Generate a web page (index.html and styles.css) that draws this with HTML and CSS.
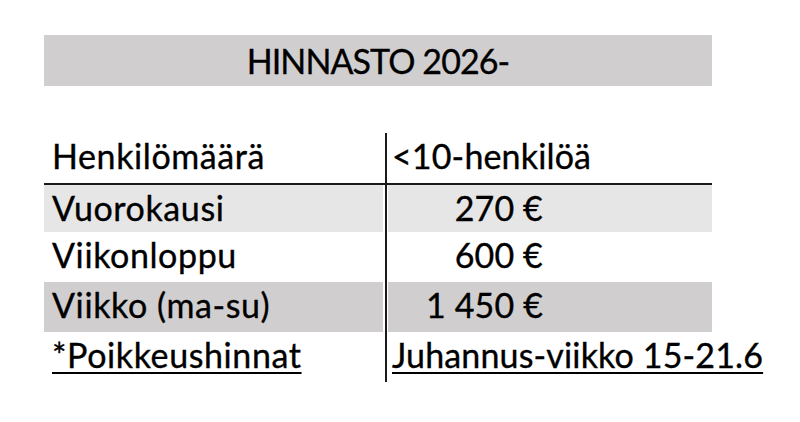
FILE: index.html
```html
<!DOCTYPE html>
<html lang="fi">
<head>
<meta charset="utf-8">
<title>Hinnasto 2026</title>
<link rel="stylesheet" href="styles.css">
</head>
<body>
<div class="sheet">
  <div class="title">HINNASTO 2026-</div>
  <div class="table">
    <div class="row head">
      <div class="c1">Henkilömäärä</div>
      <div class="c2">&lt;10-henkilöä</div>
    </div>
    <div class="row light first">
      <div class="c1">Vuorokausi</div>
      <div class="c2 num">270 €</div>
    </div>
    <div class="row">
      <div class="c1">Viikonloppu</div>
      <div class="c2 num">600 €</div>
    </div>
    <div class="row dark">
      <div class="c1">Viikko (ma-su)</div>
      <div class="c2 num">1 450 €</div>
    </div>
    <div class="row">
      <div class="c1"><span class="ul">*Poikkeushinnat</span></div>
      <div class="c2"><span class="ul">Juhannus-viikko 15-21.6</span></div>
    </div>
  </div>
</div>
</body>
</html>
```

FILE: styles.css
```css
html, body {
  margin: 0;
  padding: 0;
  background: #ffffff;
}

body {
  font-family: Lato, "Open Sans", "Liberation Sans", sans-serif;
  font-size: 34px;
  letter-spacing: 0.3px;
  color: #000000;
  -webkit-text-stroke: 0.35px #000000;
}

.sheet {
  padding: 35px 0 0 44px;
  width: 668px;
}

.title {
  height: 51px;
  line-height: 51px;
  background: #d0cece;
  text-align: center;
  white-space: nowrap;
  letter-spacing: -0.9px;
}

.table {
  margin-top: 47px;
}

.row {
  display: flex;
  height: 50px;
  line-height: 45px;
  --bg: #ffffff;
}

.row.first {
  height: 47px;
}

.row.head {
  border-bottom: 2px solid #1a1a1a;
}

.row.light {
  --bg: #e7e6e6;
}

.row.dark {
  --bg: #d0cece;
}

.c1 {
  box-sizing: border-box;
  width: 339px;
  padding-left: 8px;
  background: var(--bg);
  white-space: nowrap;
  letter-spacing: 0.6px;
}

.c2 {
  box-sizing: border-box;
  width: 327px;
  margin-left: 2px;
  border-left: 2px solid #1a1a1a;
  padding-left: 5px;
  background: linear-gradient(to right, #ffffff 0 1px, var(--bg) 1px);
  white-space: nowrap;
  letter-spacing: 0.15px;
}

.c2.num {
  text-align: right;
  padding-right: 169px;
}

.ul {
  text-decoration: underline;
  text-decoration-thickness: 2px;
  text-underline-offset: 4px;
}
```
